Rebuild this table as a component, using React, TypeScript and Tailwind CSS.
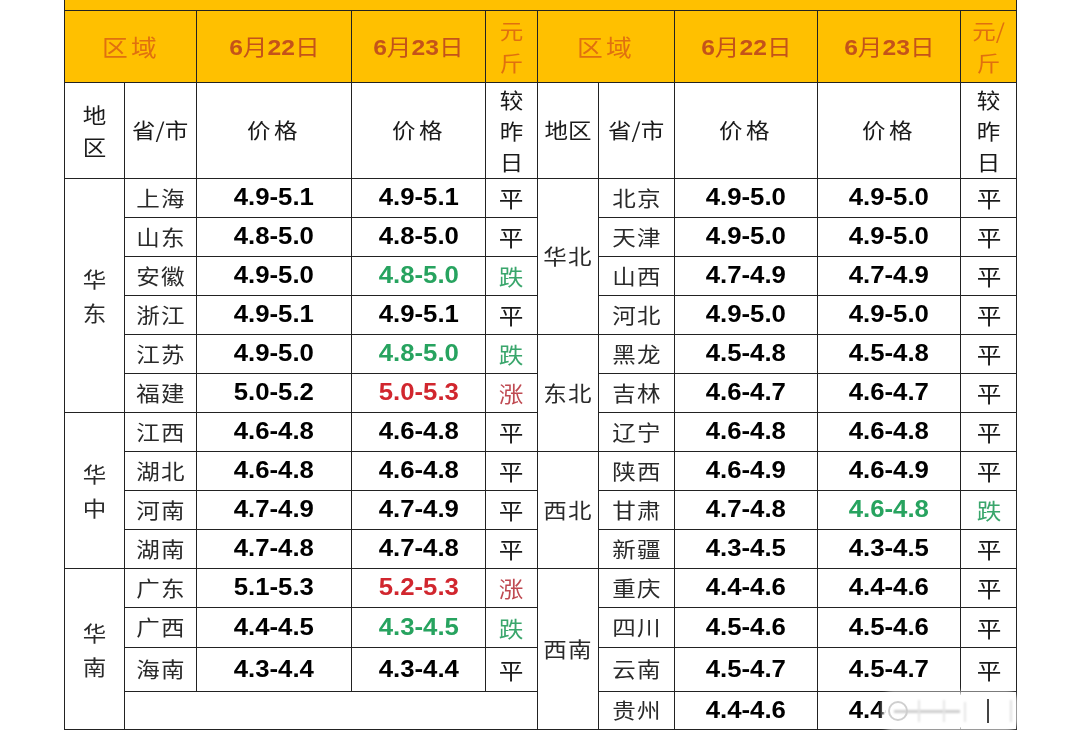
import React from "react";

type Row = [string, string, string, string];
type Group = { region: string; items: Row[]; extraEmpty?: boolean };

const leftGroups: Group[] = [
  {
    region: "华东",
    items: [
      ["上海", "4.9-5.1", "4.9-5.1", "平"],
      ["山东", "4.8-5.0", "4.8-5.0", "平"],
      ["安徽", "4.9-5.0", "4.8-5.0", "跌"],
      ["浙江", "4.9-5.1", "4.9-5.1", "平"],
      ["江苏", "4.9-5.0", "4.8-5.0", "跌"],
      ["福建", "5.0-5.2", "5.0-5.3", "涨"],
    ],
  },
  {
    region: "华中",
    items: [
      ["江西", "4.6-4.8", "4.6-4.8", "平"],
      ["湖北", "4.6-4.8", "4.6-4.8", "平"],
      ["河南", "4.7-4.9", "4.7-4.9", "平"],
      ["湖南", "4.7-4.8", "4.7-4.8", "平"],
    ],
  },
  {
    region: "华南",
    items: [
      ["广东", "5.1-5.3", "5.2-5.3", "涨"],
      ["广西", "4.4-4.5", "4.3-4.5", "跌"],
      ["海南", "4.3-4.4", "4.3-4.4", "平"],
    ],
    extraEmpty: true,
  },
];

const rightGroups: Group[] = [
  {
    region: "华北",
    items: [
      ["北京", "4.9-5.0", "4.9-5.0", "平"],
      ["天津", "4.9-5.0", "4.9-5.0", "平"],
      ["山西", "4.7-4.9", "4.7-4.9", "平"],
      ["河北", "4.9-5.0", "4.9-5.0", "平"],
    ],
  },
  {
    region: "东北",
    items: [
      ["黑龙", "4.5-4.8", "4.5-4.8", "平"],
      ["吉林", "4.6-4.7", "4.6-4.7", "平"],
      ["辽宁", "4.6-4.8", "4.6-4.8", "平"],
    ],
  },
  {
    region: "西北",
    items: [
      ["陕西", "4.6-4.9", "4.6-4.9", "平"],
      ["甘肃", "4.7-4.8", "4.6-4.8", "跌"],
      ["新疆", "4.3-4.5", "4.3-4.5", "平"],
    ],
  },
  {
    region: "西南",
    items: [
      ["重庆", "4.4-4.6", "4.4-4.6", "平"],
      ["四川", "4.5-4.6", "4.5-4.6", "平"],
      ["云南", "4.5-4.7", "4.5-4.7", "平"],
      ["贵州", "4.4-4.6", "4.4-4.6", "平"],
    ],
  },
];

const rowHeights = [39, 39, 39, 39, 39, 39, 39, 39, 39, 39, 39, 40, 44, 38];

type Cell = React.ReactNode;

type Flat = {
  regionStart?: { name: string; span: number };
  item?: Row;
  empty?: boolean;
};

function flatten(groups: Group[]): Flat[] {
  const out: Flat[] = [];
  groups.forEach((g) => {
    const span = g.items.length + (g.extraEmpty ? 1 : 0);
    g.items.forEach((it, i) => {
      out.push({ regionStart: i === 0 ? { name: g.region, span } : undefined, item: it });
    });
    if (g.extraEmpty) out.push({ empty: true });
  });
  return out;
}

const left = flatten(leftGroups);
const right = flatten(rightGroups);

const cjk = "font-['Noto_Sans_CJK_SC','Noto_Sans',sans-serif]";
const num = "font-['Liberation_Sans',Arial,sans-serif]";

const bd = "border border-[#222]";

function S({ children, className = "" }: { children: React.ReactNode; className?: string }) {
  return <span className={`inline-block scale-x-[1.12] ${className}`}>{children}</span>;
}

function trendColor(t: string) {
  if (t === "跌") return "text-[#3aa66c]";
  if (t === "涨") return "text-[#bf4a52]";
  return "text-[#1a1a1a]";
}
function priceColor(t: string) {
  if (t === "跌") return "text-[#27a35f]";
  if (t === "涨") return "text-[#d1262e]";
  return "text-black";
}

function dataCells(f: Flat, side: "l" | "r"): Cell[] {
  const cells: Cell[] = [];
  if (f.regionStart) {
    const name = f.regionStart.name;
    cells.push(
      <td
        key={side + "reg"}
        rowSpan={f.regionStart.span}
        className={`${bd} text-center align-middle ${cjk} text-[21px] text-[#2a2a2a]`}
      >
        {side === "l" ? (
          <div className="flex flex-col items-center leading-[34px]">
            <S>{name[0]}</S>
            <S>{name[1]}</S>
          </div>
        ) : (
          <S className="tracking-[1px]">{name}</S>
        )}
      </td>
    );
  }
  if (f.empty) {
    cells.push(<td key={side + "empty"} colSpan={4} className={bd}></td>);
    return cells;
  }
  const it = f.item!;
  cells.push(
    <td key={side + "p"} className={`${bd} text-center ${cjk} text-[21px] text-[#2a2a2a]`}>
      <S className="tracking-[1px]">{it[0]}</S>
    </td>
  );
  cells.push(
    <td key={side + "a"} className={`${bd} text-center ${num} font-bold text-[23px] text-black`}>
      <S>{it[1]}</S>
    </td>
  );
  cells.push(
    <td key={side + "b"} className={`${bd} text-center ${num} font-bold text-[23px] ${priceColor(it[3])}`}>
      <S>{it[2]}</S>
    </td>
  );
  cells.push(
    <td key={side + "t"} className={`${bd} text-center ${cjk} text-[22px] ${trendColor(it[3])}`}>
      <S>{it[3]}</S>
    </td>
  );
  return cells;
}

function DateHead({ d }: { d: string }) {
  return (
    <S className="text-[#c4531a] text-[22px]">
      <span className={`${num} font-bold`}>6</span>
      <span className={cjk}>月</span>
      <span className={`${num} font-bold`}>{d}</span>
      <span className={cjk}>日</span>
    </S>
  );
}

export default function App() {
  return (
    <div className="w-[1080px] h-[735px] bg-white overflow-hidden relative">
      <div className="pl-16">
        <table className="table-fixed border-collapse w-[952px]">
          <colgroup>
            <col className="w-[60px]" />
            <col className="w-[72px]" />
            <col className="w-[155px]" />
            <col className="w-[134px]" />
            <col className="w-[52px]" />
            <col className="w-[61px]" />
            <col className="w-[76px]" />
            <col className="w-[143px]" />
            <col className="w-[143px]" />
            <col className="w-[56px]" />
          </colgroup>
          <tbody>
            <tr className="h-[10px]">
              <td colSpan={10} className="border-x border-b border-[#222] bg-[#ffc000] p-0"></td>
            </tr>
            <tr className="h-[72px] bg-[#ffc000]">
              <td colSpan={2} className={`${bd} text-center ${cjk} text-[23px] text-[#e0700f]`}>
                <S className="tracking-[3px]">区域</S>
              </td>
              <td className={`${bd} text-center`}>
                <DateHead d="22" />
              </td>
              <td className={`${bd} text-center`}>
                <DateHead d="23" />
              </td>
              <td className={`${bd} text-center ${cjk} text-[21px] text-[#e0700f]`}>
                <div className="flex flex-col items-center leading-[32px]">
                  <S>元</S>
                  <S>斤</S>
                </div>
              </td>
              <td colSpan={2} className={`${bd} text-center ${cjk} text-[23px] text-[#e0700f]`}>
                <S className="tracking-[3px]">区域</S>
              </td>
              <td className={`${bd} text-center`}>
                <DateHead d="22" />
              </td>
              <td className={`${bd} text-center`}>
                <DateHead d="23" />
              </td>
              <td className={`${bd} text-center ${cjk} text-[21px] text-[#e0700f]`}>
                <div className="flex flex-col items-center leading-[32px]">
                  <S>元/</S>
                  <S>斤</S>
                </div>
              </td>
            </tr>
            <tr className={`h-[96px] ${cjk} text-[21px] text-[#1a1a1a]`}>
              <td className={`${bd} text-center`}>
                <div className="flex flex-col items-center leading-[32px]">
                  <S>地</S>
                  <S>区</S>
                </div>
              </td>
              <td className={`${bd} text-center`}>
                <S>省/市</S>
              </td>
              <td className={`${bd} text-center`}>
                <S className="tracking-[3px]">价格</S>
              </td>
              <td className={`${bd} text-center`}>
                <S className="tracking-[3px]">价格</S>
              </td>
              <td className={`${bd} text-center`}>
                <div className="flex flex-col items-center leading-[31px]">
                  <S>较</S>
                  <S>昨</S>
                  <S>日</S>
                </div>
              </td>
              <td className={`${bd} text-center`}>
                <S>地区</S>
              </td>
              <td className={`${bd} text-center`}>
                <S>省/市</S>
              </td>
              <td className={`${bd} text-center`}>
                <S className="tracking-[3px]">价格</S>
              </td>
              <td className={`${bd} text-center`}>
                <S className="tracking-[3px]">价格</S>
              </td>
              <td className={`${bd} text-center`}>
                <div className="flex flex-col items-center leading-[31px]">
                  <S>较</S>
                  <S>昨</S>
                  <S>日</S>
                </div>
              </td>
            </tr>
            {rowHeights.map((h, i) => (
              <tr key={i} style={{ height: h }}>
                {dataCells(left[i], "l")}
                {dataCells(right[i], "r")}
              </tr>
            ))}
          </tbody>
        </table>
      </div>
      {/* watermark overlay */}
      <div className="absolute left-[886px] top-[695px] w-[128px] h-[32px] bg-white rounded-[6px] shadow-[0_0_5px_3px_rgba(255,255,255,0.95)]">
        <div className="absolute left-[2px] top-[6px] w-[20px] h-[20px] rounded-full border-2 border-[#cfcfcf] blur-[0.5px]"></div>
        <div className="absolute left-[8px] top-[15px] w-[66px] h-[3px] bg-[#cdcdcd] blur-[1px]"></div>
        <div className="absolute left-[32px] top-[5px] w-[2px] h-[22px] bg-[#e4e4e4] blur-[1px]"></div>
        <div className="absolute left-[57px] top-[5px] w-[2px] h-[22px] bg-[#e6e6e6] blur-[1px]"></div>
        <div className="absolute left-[78px] top-[7px] w-[2px] h-[20px] bg-[#e6e6e6] blur-[1px]"></div>
        <div className="absolute left-[101px] top-[4px] w-[2px] h-[24px] bg-[#444] blur-[0.5px]"></div>
        <div className="absolute left-[124px] top-[5px] w-[2px] h-[22px] bg-[#e0e0e0] blur-[1px]"></div>
      </div>
    </div>
  );
}
